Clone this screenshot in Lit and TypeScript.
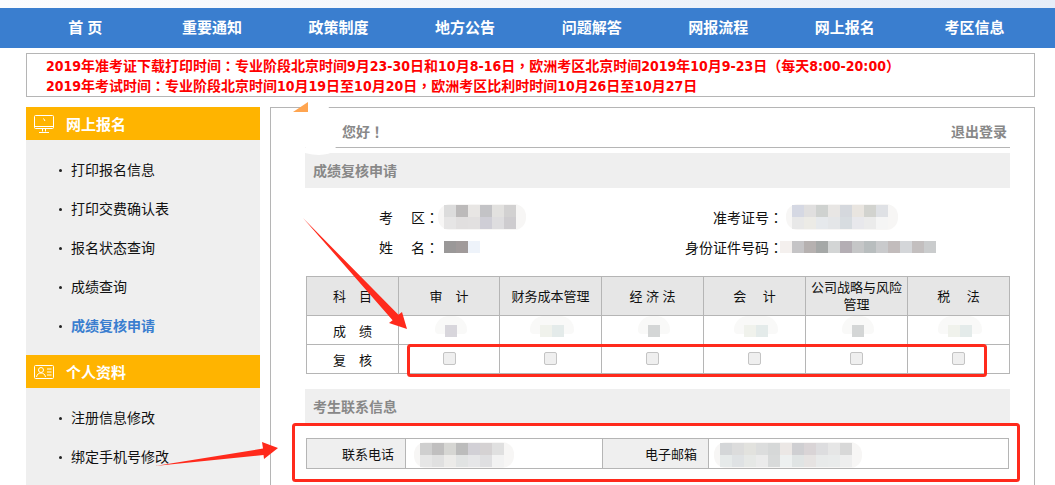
import { LitElement, html, css, svg } from "lit";
import { customElement } from "lit/decorators.js";

const mosaics = {
  region: { pale: "", rows: [["#dcdcdc","#bcbaba","#e8e6e4","#c3c3c6","#e2e1df","#d2d1d1"],["#e6e5e5","#e1dfdf","#e2e0e0","#cfced6","#dedddf","#cecccf"]] },
  name: { pale: "none", rows: [["#9a9898","#a09a9a","#eef3fa"]] },
  ticket: { pale: "", rows: [["#d5d8e3","#e0dfdf","#cfd2d0","#e8e6e4","#d5d8dd","#e9e5e0","#d2d3cf","#dfe1e5"],["#e8e8e8","#ecebe6","#e6e9ec","#e4e6e8","#d7dce0","#e8e8ec","#ebebeb","#f5f5f5"]] },
  idcard: { pale: "none", rows: [["#f4f0ee","#c5c4c6","#b6b1b0","#a5a8a7","#d3d5d5","#b4aeb4","#c5c6c7","#b8bdbe","#c9cacc","#c2bcbc","#d4d6d9","#c3bfbf","#cacccd"]] },
  s1: { pale: "mark", rows: [["#d8d6dc"]] },
  s2: { pale: "mark", rows: [["#f0f2ec","#e4ebea"]] },
  s3: { pale: "mark", rows: [["#d4d6d6"]] },
  phone: { pale: "", rows: [["#cfcfcf","#c0bfbf","#d6d6d3","#bcbcbc","#d2d0d6","#d5d2d3","#e0e0e0"],["#e6e6e6","#e0e0e0","#ecebe9","#e1e3e3","#e6e6e8","#dfdfe1","#f2f2f2"]] },
  mail: { pale: "", rows: [["#d4d6d8","#dcdcdc","#e2e2de","#dcdddd","#d6d8d8","#ebe7e5","#cfcfd2","#d9d4d6","#dddddf","#e6e6e6","#d8d8d8"],["#e6eaea","#dfe2e4","#e6e8e6","#ebebeb","#d8dada","#edf0f0","#e0e4e4","#e6e3e2","#e8eaea","#e9ebeb","#eeeeee"]] },
};
type MosaicKey = keyof typeof mosaics;

@customElement("app-root")
export class AppRoot extends LitElement {
  static styles = css`
    :host { display: block; width: 1055px; height: 485px; overflow: hidden; position: relative; background: #fff; font-family: "Liberation Sans","Noto Sans CJK SC",sans-serif; color: #111; }
    .strip { height: 8px; background: linear-gradient(90deg, #fbfcfe, #e6edf8); }
    nav { height: 40px; background: #3a7ecf; display: flex; padding-left: 22px; }
    nav a { width: 126.600px; flex: none; color: #fff; font-size: 15px; font-weight: 700; line-height: 40px; text-align: center; }
    nav a:last-child { margin-left: 3px; }
    .p { font-family: "Noto Sans CJK TC",sans-serif; }
    .notice { margin: 5px 20px 0 26px; border: 1px solid #b5b5b5; padding: 1px 0 0 19px; box-sizing: content-box; color: #f00; font-size: 14px; font-weight: 700; line-height: 19px; display: flex; flex-direction: column; justify-content: center; font-family: "DejaVu Sans","Noto Sans CJK SC",sans-serif; font-stretch: condensed; white-space: nowrap; height: 41px; }
    .body { display: flex; margin: 10px 20px 0 26px; gap: 10px; height: 400px; }
    aside { width: 234px; flex: none; }
    .side-head { height: 33px; background: #ffb400; color: #fff; font-size: 15px; font-weight: 700; display: flex; align-items: center; gap: 12px; padding-left: 8px; }
    .side-list { background: #efefef; padding: 9px 0 11px; margin: 0; list-style: none; }
    .side-list li { height: 39px; display: flex; align-items: center; padding-left: 33px; gap: 9px; font-size: 14px; }
    .side-list li::before { content: ""; width: 3px; height: 3px; border-radius: 50%; background: #222; margin-top: 3px; }
    .side-list li.on { color: #3a7ecf; font-weight: 700; }
    .side-list.last { height: 97px; }
    main { flex: 1; border: 1px solid #b5b5b5; border-bottom: 0; padding: 0 24px 0 34px; min-width: 0; }
    .hello { height: 40px; display: flex; justify-content: space-between; align-items: center; border-bottom: 1px solid #b5b5b5; color: #888; font-size: 14px; font-weight: 700; padding: 6px 3px 0 37px; box-sizing: border-box; }
    .bar { background: #efefef; height: 35px; margin-top: 5px; line-height: 36px; padding-left: 8px; color: #888; font-size: 14px; font-weight: 700; }
    .info { display: grid; grid-template-columns: 352px 1fr; row-gap: 6px; margin-top: 17px; font-size: 14px; }
    .info div { display: flex; align-items: center; height: 24px; }
    .info label { text-align: right; white-space: pre; flex: none; }
    .info .l1 { width: 134px; margin-right: 5px; }
    .info .l2 { width: 126px; margin-right: -3px; position: relative; z-index: 1; }
    .info .gap { margin-left: 12px; }
    table { border-collapse: collapse; table-layout: fixed; font-size: 13px; width: 703px; margin-left: 1px; }
    td, th { border: 1px solid #b5b5b5; text-align: center; padding: 0; font-weight: 400; white-space: pre-wrap; }
    .marks { margin-top: 17px; }
    .marks thead th { background: #e6e6e6; height: 38px; line-height: 17px; }
    .marks .r1 td { height: 28px; }
    .marks .r2 td { height: 28px; }
    .box { display: block; margin: 0 auto 1px; width: 11px; height: 11px; border: 1px solid #c4c4c4; border-radius: 2px; background: #efefef; }
    .bar2 { margin-top: 15px; height: 35px; }
    .contact { margin-top: 14px; }
    .contact td { height: 29px; }
    .contact .k { background: #efefef; text-align: right; padding-right: 11px; }
    .contact .v { text-align: left; padding-left: 14px; padding-top: 3px; box-sizing: border-box; }
    .contact .v.m { padding-left: 11px; }
    .mosaic { position: relative; display: inline-grid; grid-auto-flow: row; isolation: isolate; vertical-align: middle; }
    .mosaic .row { display: flex; }
    .mosaic .cell { width: 12px; height: 12px; }
    .mosaic.soft::before { content: ""; position: absolute; z-index: -1; inset: -1px -10px -1px -6px; border-radius: 12px; background: #f7f6f5; }
    .mosaic.mark::before { content: ""; position: absolute; z-index: -1; inset: -9px -10px 3px -10px; border-radius: 14px 14px 4px 4px; background: #f9f9f8; }
    .center { display: flex; justify-content: center; padding: 2px 0 0 3px; }
    .ov { position: absolute; left: 0; top: 0; pointer-events: none; }
  `;

  mosaic(key: MosaicKey, extra = "") {
    const m = mosaics[key];
    const cls = m.pale === "" ? "soft" : m.pale === "mark" ? "mark" : "";
    return html`<span class="mosaic ${cls} ${extra}">${m.rows.map(
      (r) => html`<span class="row">${r.map((c) => html`<span class="cell" style="background:${c}"></span>`)}</span>`
    )}</span>`;
  }

  render() {
    const nav = ["首 页","重要通知","政策制度","地方公告","问题解答","网报流程","网上报名","考区信息"];
    const cols = ["审　计","财务成本管理","经 济 法","会　 计","公司战略与风险\n管理","税　 法"];
    return html`
      <div class="strip"></div>
      <nav>${nav.map((n) => html`<a>${n}</a>`)}</nav>
      <div class="notice">
        <div>2019年准考证下载打印时间<span class="p">：</span>专业阶段北京时间9月23-30日和10月8-16日<span class="p">，</span>欧洲考区北京时间2019年10月9-23日<span class="p">（</span>每天8:00-20:00<span class="p">）</span></div>
        <div>2019年考试时间<span class="p">：</span>专业阶段北京时间10月19日至10月20日<span class="p">，</span>欧洲考区比利时时间10月26日至10月27日</div>
      </div>
      <div class="body">
        <aside>
          <div class="side-head">
            <svg width="20" height="18" viewBox="0 0 20 18" fill="none" stroke="#fff"><rect x=".5" y=".5" width="19" height="13" rx="1"/><path d="M.5 11.500h19M8.500 14v2.500M11.500 14v2.500M5 17.500h10M9.500 3.500l1.500 2.500" /></svg>
            <span>网上报名</span>
          </div>
          <ul class="side-list">
            <li>打印报名信息</li><li>打印交费确认表</li><li>报名状态查询</li><li>成绩查询</li><li class="on">成绩复核申请</li>
          </ul>
          <div class="side-head">
            <svg width="20" height="14" viewBox="0 0 20 14" fill="none" stroke="#fff"><rect x=".5" y=".5" width="19" height="13" rx="1"/><circle cx="7" cy="5" r="2.500"/><path d="M2.500 12c.5-3 2.500-4 4.500-4s4 1 4.500 4M13 4h4.500M13 7h4.500M13 10h4.500"/></svg>
            <span>个人资料</span>
          </div>
          <ul class="side-list last">
            <li>注册信息修改</li><li>绑定手机号修改</li>
          </ul>
        </aside>
        <main>
          <div class="hello"><span>您好<span class="p">！</span></span><span>退出登录</span></div>
          <div class="bar">成绩复核申请</div>
          <div class="info">
            <div><label class="l1">考　 区<span class="p">：</span></label>${this.mosaic("region")}</div>
            <div><label class="l2">准考证号<span class="p">：</span></label>${this.mosaic("ticket", "gap")}</div>
            <div><label class="l1">姓　 名<span class="p">：</span></label>${this.mosaic("name")}</div>
            <div><label class="l2">身份证件号码<span class="p">：</span></label>${this.mosaic("idcard")}</div>
          </div>
          <table class="marks">
            <colgroup><col style="width:92px"/>${cols.map((_, i) => html`<col style="width:${i === 0 ? 101 : 102}px"/>`)}</colgroup>
            <thead><tr><th>科　目</th>${cols.map((c) => html`<th>${c}</th>`)}</tr></thead>
            <tbody>
              <tr class="r1"><td>成　绩</td>
                ${(["s1","s2","s3","s2","s3","s2"] as MosaicKey[]).map((k) => html`<td><div class="center">${this.mosaic(k)}</div></td>`)}
              </tr>
              <tr class="r2"><td>复　核</td>${cols.map(() => html`<td><span class="box"></span></td>`)}</tr>
            </tbody>
          </table>
          <div class="bar bar2">考生联系信息</div>
          <table class="contact">
            <colgroup><col style="width:99px"/><col style="width:197px"/><col style="width:106px"/><col/></colgroup>
            <tr><td class="k">联系电话</td><td class="v">${this.mosaic("phone")}</td><td class="k">电子邮箱</td><td class="v m">${this.mosaic("mail")}</td></tr>
          </table>
        </main>
      </div>
      <svg class="ov" width="1055" height="485" viewBox="0 0 1055 485">
        ${svg`<path d="M306 103 H328 L336 150 Q325 158 305 153 Z" fill="#fff"/>
        <path d="M293 112 L308 102 L308 112 Z" fill="#ffa550"/>
        <path d="M303 218 L398.400 314.800 L402 312 L407 329 L389 323 L392.600 320.200 Z" fill="#ff2a1c"/>
        <path d="M155 466 L263 448.500 L262 442 L278 448 L264 459 L263.500 455 Z" fill="#ff2a1c"/>
        <rect x="408.500" y="345.500" width="577" height="30" rx="2" fill="none" stroke="#ff2a1c" stroke-width="3"/>
        <rect x="293.500" y="424.500" width="725" height="56" rx="2" fill="none" stroke="#ff2a1c" stroke-width="3"/>`}
      </svg>
    `;
  }
}
